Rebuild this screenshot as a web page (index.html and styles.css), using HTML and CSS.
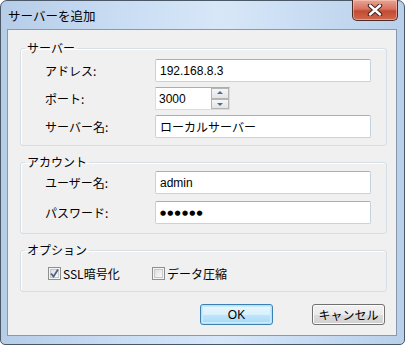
FILE: index.html
```html
<!DOCTYPE html>
<html lang="ja">
<head>
    <meta charset="UTF-8">
    <meta name="viewport" content="width=device-width, initial-scale=1.0">
    <title>サーバーを追加</title>
    <link rel="stylesheet" href="styles.css">
</head>
<body>
    <div class="window">
        <div class="titlebar">
            <span class="title">サーバーを追加</span>
            <button class="close-btn" aria-label="閉じる">
                <svg width="16" height="12" viewBox="0 0 16 12">
                    <path d="M3 1.5 L13 10.5 M13 1.5 L3 10.5" stroke="#3b2320" stroke-width="4.4" stroke-linecap="round"/>
                    <path d="M3 1.5 L13 10.5 M13 1.5 L3 10.5" stroke="#ffffff" stroke-width="2.4" stroke-linecap="round"/>
                </svg>
            </button>
        </div>

        <div class="client">
            <fieldset class="group group-server">
                <legend>サーバー</legend>
                <div class="row">
                    <label class="field-label">アドレス:</label>
                    <input class="textbox" type="text" value="192.168.8.3">
                </div>
                <div class="row">
                    <label class="field-label">ポート:</label>
                    <div class="spinbox">
                        <input class="spin-input" type="text" value="3000">
                        <div class="spin-buttons">
                            <span class="spin-btn spin-up"></span>
                            <span class="spin-btn spin-down"></span>
                        </div>
                    </div>
                </div>
                <div class="row">
                    <label class="field-label">サーバー名:</label>
                    <input class="textbox" type="text" value="ローカルサーバー">
                </div>
            </fieldset>

            <fieldset class="group group-account">
                <legend>アカウント</legend>
                <div class="row">
                    <label class="field-label">ユーザー名:</label>
                    <input class="textbox" type="text" value="admin">
                </div>
                <div class="row">
                    <label class="field-label">パスワード:</label>
                    <div class="textbox password">●●●●●●</div>
                </div>
            </fieldset>

            <fieldset class="group group-options">
                <legend>オプション</legend>
                <div class="check-row">
                    <label class="check">
                        <span class="check-box checked">
                            <svg width="9" height="9" viewBox="0 0 9 9">
                                <path d="M1 4.5 L3.5 7.5 L8 0.5" fill="none" stroke="#4d6185" stroke-width="1.8"/>
                            </svg>
                        </span>
                        SSL暗号化
                    </label>
                    <label class="check">
                        <span class="check-box"></span>
                        データ圧縮
                    </label>
                </div>
            </fieldset>

            <div class="buttons">
                <button class="btn btn-default">OK</button>
                <button class="btn">キャンセル</button>
            </div>
        </div>
    </div>
</body>
</html>
```

FILE: styles.css
```css
* {
    margin: 0;
    padding: 0;
    box-sizing: border-box;
}

body {
    font-family: "Noto Sans CJK JP", "DejaVu Sans", sans-serif;
    font-size: 12px;
    color: #000;
    background: #ffffff;
    width: 405px;
    height: 345px;
    overflow: hidden;
}

.window {
    width: 405px;
    height: 345px;
    border: 1px solid #4b5868;
    border-radius: 7px 7px 5px 5px;
    background: linear-gradient(90deg, #b6cde8 0%, #c9ddf3 30%, #d8e7f8 55%, #c5daf1 80%, #b9d0ea 100%);
    display: flex;
    flex-direction: column;
    position: relative;
}

.titlebar {
    height: 28px;
    display: flex;
    align-items: center;
    padding-left: 7px;
}

.title {
    font-size: 12.5px;
    line-height: 14px;
    color: #000;
    margin-top: 1px;
}

.close-btn {
    position: absolute;
    top: -1px;
    left: 351px;
    width: 46px;
    height: 21px;
    border: 1px solid #4f2a25;
    border-top: none;
    border-radius: 0 0 5px 5px;
    background: linear-gradient(180deg, #e8a492 0%, #d8735f 45%, #c24a32 55%, #cf6a4f 100%);
    box-shadow: inset 0 0 0 1px rgba(255, 210, 200, 0.5);
    display: flex;
    align-items: center;
    justify-content: center;
}

.client {
    margin: 0 7px 8px 6px;
    flex: 1;
    background: #f0f0f0;
    border: 1px solid #8899ab;
    padding: 11px 9px 0 12px;
    display: flex;
    flex-direction: column;
}

.group {
    border: 1px solid #d5dfe5;
    border-radius: 3px;
    box-shadow: inset 1px 1px 0 #fff;
    width: 367px;
    padding-left: 4px;
    padding-right: 15px;
}

.group legend {
    font-size: 12px;
    line-height: 14px;
    padding: 0 2px;
}

.group-server {
    padding-top: 4px;
    padding-bottom: 7px;
}

.group-account {
    margin-top: 9px;
    padding-top: 2px;
    padding-bottom: 9px;
}

.group-options {
    margin-top: 9px;
    padding-top: 10px;
    padding-bottom: 11px;
}

.row {
    display: flex;
    align-items: center;
    height: 23px;
    padding-left: 20px;
}

.group-server .row + .row {
    margin-top: 5px;
}

.group-account .row + .row {
    margin-top: 7px;
}

.field-label {
    width: 110px;
    line-height: 14px;
}

.textbox {
    width: 216px;
    height: 23px;
    border: 1px solid #c4d3e0;
    border-top-color: #abadb3;
    border-radius: 2px;
    background: #fff;
    font-family: "Liberation Sans", "Noto Sans CJK JP", sans-serif;
    font-size: 12px;
    line-height: 14px;
    padding: 0 4px;
    color: #000;
    outline: none;
}

.password {
    display: flex;
    align-items: center;
    font-size: 7px;
    letter-spacing: 1.2px;
    font-family: "DejaVu Sans", sans-serif;
}

.spinbox {
    width: 75px;
    height: 23px;
    border: 1px solid #abadb3;
    border-color: #abadb3 #d9dde3 #d9dde3 #d9dde3;
    background: #fff;
    display: flex;
}

.spin-input {
    flex: 1;
    min-width: 0;
    border: none;
    outline: none;
    font-family: "Liberation Sans", "Noto Sans CJK JP", sans-serif;
    font-size: 12px;
    padding: 0 3px;
    background: transparent;
}

.spin-buttons {
    width: 18px;
    display: flex;
    flex-direction: column;
}

.spin-btn {
    flex: 1;
    border: 1px solid #b4b4b4;
    background: linear-gradient(180deg, #f6f6f6 0%, #e4e4e4 100%);
    position: relative;
}

.spin-btn::after {
    content: "";
    position: absolute;
    left: 50%;
    top: 50%;
    margin-left: -3px;
    border-left: 3px solid transparent;
    border-right: 3px solid transparent;
}

.spin-up::after {
    margin-top: -2px;
    border-bottom: 3px solid #4d6aa8;
}

.spin-down::after {
    margin-top: -1px;
    border-top: 3px solid #4d6aa8;
}

.check-row {
    display: flex;
    align-items: center;
    height: 13px;
    padding-left: 23px;
}

.check {
    display: flex;
    align-items: center;
    gap: 2px;
    line-height: 14px;
    width: 104px;
}

.check-box {
    width: 13px;
    height: 13px;
    border: 1px solid #8e8f8f;
    background: linear-gradient(135deg, #d8d8d8 0%, #f4f4f4 70%, #ffffff 100%);
    box-shadow: inset 0 0 0 1px #f4f4f4, inset 0 0 0 2px #c8c8c8;
    display: flex;
    align-items: center;
    justify-content: center;
}

.buttons {
    display: flex;
    justify-content: flex-end;
    gap: 39px;
    margin-top: 12px;
    padding-right: 2px;
}

.btn {
    width: 73px;
    height: 21px;
    border: 1px solid #707070;
    border-radius: 3px;
    background: linear-gradient(180deg, #f2f2f2 0%, #ebebeb 50%, #dddddd 51%, #cfcfcf 100%);
    box-shadow: inset 0 0 0 1px #fcfcfc;
    font-family: "Liberation Sans", "Noto Sans CJK JP", sans-serif;
    font-size: 12px;
    color: #000;
}

.btn-default {
    border-color: #3c7fb1;
    background: linear-gradient(180deg, #eaf6fd 0%, #d9f0fc 50%, #bee6fd 51%, #a7d9f5 100%);
    box-shadow: inset 0 0 0 1px #48d8fb33, inset 0 0 0 2px #c8ecfb;
}
```
